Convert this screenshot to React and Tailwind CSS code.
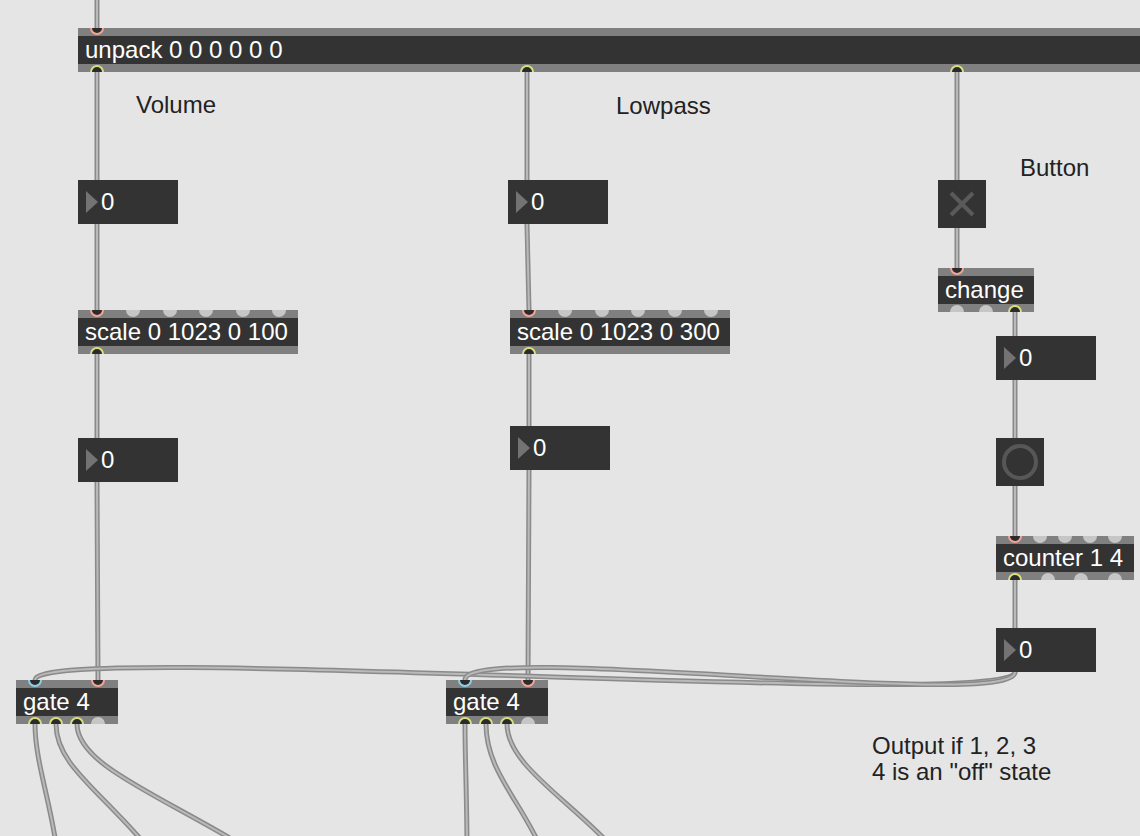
import React from "react";

const RING = {
  in: "border-2 border-[#f2a394] bg-[#2b2b2b]",
  out: "border-2 border-[#d9e07c] bg-[#2b2b2b]",
  blue: "border-2 border-[#8ad0e6] bg-[#2b2b2b]",
  off: "bg-[#c6c6c6]",
};

function Port({ x, kind, side }) {
  return (
    <span
      className={`absolute w-[14px] h-[14px] rounded-full ${RING[kind]}`}
      style={side === "top" ? { left: x - 7, top: -7 } : { left: x - 7, bottom: -7 }}
    />
  );
}

function ObjBox({ className, text, ins = [], outs = [] }) {
  return (
    <div className={`absolute overflow-hidden flex flex-col ${className}`}>
      <div className="h-[8px] bg-[#808080]" />
      <div className="h-[28px] bg-[#333333] text-white text-[24px] leading-[28px] pl-[7px] whitespace-nowrap">
        {text}
      </div>
      <div className="h-[8px] bg-[#808080]" />
      {ins.map(([x, k], i) => (
        <Port key={"i" + i} x={x} kind={k} side="top" />
      ))}
      {outs.map(([x, k], i) => (
        <Port key={"o" + i} x={x} kind={k} side="bottom" />
      ))}
    </div>
  );
}

function NumBox({ className }) {
  return (
    <div className={`absolute h-[44px] w-[100px] bg-[#333333] flex items-center pl-[8px] gap-[3px] ${className}`}>
      <svg width="12" height="22" viewBox="0 0 12 22">
        <polygon points="0,0 12,11 0,22" fill="#737373" />
      </svg>
      <span className="text-white text-[24px] leading-[28px]">0</span>
    </div>
  );
}

const straight = [
  "M97 0 V28",
  "M97 72 V180",
  "M97 224 V310",
  "M97 354 V438",
  "M97 482 L98 680",
  "M527 72 V180",
  "M527 224 L529 310",
  "M529 354 V426",
  "M529 470 L528 680",
  "M957 72 V180",
  "M957 228 V268",
  "M1015 312 V336",
  "M1015 380 V438",
  "M1015 486 V536",
  "M1015 580 V628",
  "M1015 672 C1015 712 35 640 35 680",
  "M1015 672 C1015 712 465 640 465 680",
  "M35 724 C35 760 50 800 57 850",
  "M56 724 C56 765 100 790 150 850",
  "M77 724 C77 765 160 795 250 850",
  "M465 724 C465 760 467 800 467 850",
  "M486 724 C486 770 520 800 542 850",
  "M507 724 C507 765 570 800 615 850",
];

export default function App() {
  return (
    <div
      className="relative w-[1140px] h-[836px] overflow-hidden bg-[#e5e5e5]"
      style={{ fontFamily: '"Liberation Sans", Arial, sans-serif' }}
    >
      <svg className="absolute left-0 top-0" width="1140" height="836">
        {straight.map((d, i) => (
          <g key={i} fill="none" strokeLinecap="round">
            <path d={d} stroke="#8a8a8a" strokeWidth="5" />
            <path d={d} stroke="#b9b9b9" strokeWidth="2" />
          </g>
        ))}
      </svg>

      {/* comments */}
      <div className="absolute left-[136px] top-[92px] text-[24px] leading-[26px] text-[#222]">Volume</div>
      <div className="absolute left-[616px] top-[93px] text-[24px] leading-[26px] text-[#222]">Lowpass</div>
      <div className="absolute left-[1020px] top-[155px] text-[24px] leading-[26px] text-[#222]">Button</div>
      <div className="absolute left-[872px] top-[733px] text-[24px] leading-[26px] text-[#222]">
        <div>Output if 1, 2, 3</div>
        <div>4 is an "off" state</div>
      </div>

      <ObjBox
        className="left-[78px] top-[28px] w-[1100px]"
        text="unpack 0 0 0 0 0 0"
        ins={[[19, "in"]]}
        outs={[[19, "out"], [449, "out"], [879, "out"]]}
      />

      {/* left column */}
      <NumBox className="left-[78px] top-[180px]" />
      <ObjBox
        className="left-[78px] top-[310px] w-[220px]"
        text="scale 0 1023 0 100"
        ins={[[19, "in"], [55, "off"], [92, "off"], [128, "off"], [165, "off"], [201, "off"]]}
        outs={[[19, "out"]]}
      />
      <NumBox className="left-[78px] top-[438px]" />
      <ObjBox
        className="left-[16px] top-[680px] w-[102px]"
        text="gate 4"
        ins={[[19, "blue"], [82, "in"]]}
        outs={[[19, "out"], [40, "out"], [61, "out"], [82, "off"]]}
      />

      {/* middle column */}
      <NumBox className="left-[508px] top-[180px]" />
      <ObjBox
        className="left-[510px] top-[310px] w-[220px]"
        text="scale 0 1023 0 300"
        ins={[[19, "in"], [55, "off"], [92, "off"], [128, "off"], [165, "off"], [201, "off"]]}
        outs={[[19, "out"]]}
      />
      <NumBox className="left-[510px] top-[426px]" />
      <ObjBox
        className="left-[446px] top-[680px] w-[102px]"
        text="gate 4"
        ins={[[19, "blue"], [82, "in"]]}
        outs={[[19, "out"], [40, "out"], [61, "out"], [82, "off"]]}
      />

      {/* right column */}
      <div className="absolute left-[938px] top-[180px] w-[48px] h-[48px] bg-[#333333] flex items-center justify-center">
        <svg width="26" height="26" viewBox="0 0 26 26">
          <path d="M2 2 L24 24 M24 2 L2 24" stroke="#5a5a5a" strokeWidth="4" />
        </svg>
      </div>
      <ObjBox
        className="left-[938px] top-[268px] w-[96px]"
        text="change"
        ins={[[19, "in"]]}
        outs={[[19, "off"], [48, "off"], [77, "out"]]}
      />
      <NumBox className="left-[996px] top-[336px]" />
      <div className="absolute left-[996px] top-[438px] w-[48px] h-[48px] bg-[#333333] flex items-center justify-center">
        <div className="w-[36px] h-[36px] rounded-full border-[4px] border-[#575757]" />
      </div>
      <ObjBox
        className="left-[996px] top-[536px] w-[138px]"
        text="counter 1 4"
        ins={[[19, "in"], [44, "off"], [69, "off"], [94, "off"], [119, "off"]]}
        outs={[[19, "out"], [52, "off"], [85, "off"], [119, "off"]]}
      />
      <NumBox className="left-[996px] top-[628px]" />
    </div>
  );
}
